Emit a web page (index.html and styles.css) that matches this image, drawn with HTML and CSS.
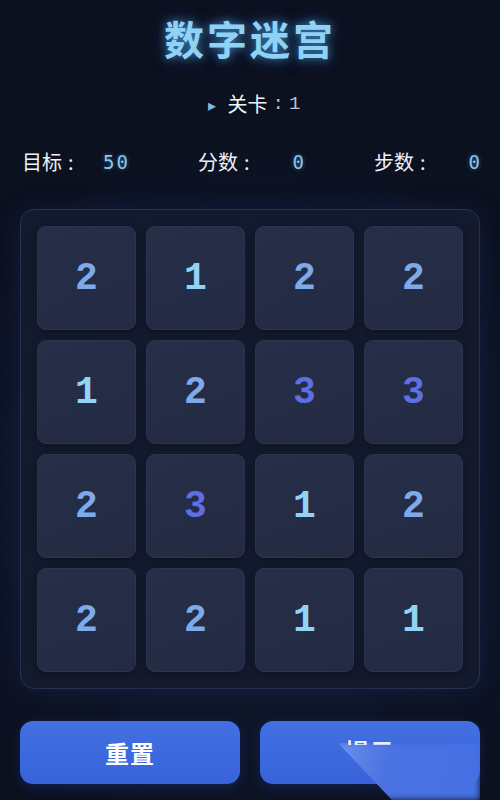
FILE: index.html
```html
<!DOCTYPE html>
<html lang="zh-CN">
<head>
  <meta charset="UTF-8">
  <title>数字迷宫</title>
  <link rel="stylesheet" href="styles.css">
</head>
<body>
  <div class="app">
    <h1 class="title">数字迷宫</h1>

    <div class="level"><span class="arrow">▸</span><span class="level-name">关卡</span><span class="level-num">:1</span></div>

    <div class="stats">
      <div class="stat"><span class="stat-label">目标<span class="colon">:</span></span><span class="stat-value">50</span></div>
      <div class="stat"><span class="stat-label">分数<span class="colon">:</span></span><span class="stat-value">0</span></div>
      <div class="stat"><span class="stat-label">步数<span class="colon">:</span></span><span class="stat-value">0</span></div>
    </div>

    <div class="board">
      <div class="cell n2">2</div><div class="cell n1">1</div><div class="cell n2">2</div><div class="cell n2">2</div>
      <div class="cell n1">1</div><div class="cell n2">2</div><div class="cell n3">3</div><div class="cell n3">3</div>
      <div class="cell n2">2</div><div class="cell n3">3</div><div class="cell n1">1</div><div class="cell n2">2</div>
      <div class="cell n2">2</div><div class="cell n2">2</div><div class="cell n1">1</div><div class="cell n1">1</div>
    </div>

    <div class="actions">
      <button class="btn">重置</button>
      <button class="btn btn-hint"><span class="beam"></span><span class="hint-clip"><span class="hint-text">提示</span></span></button>
    </div>
  </div>
</body>
</html>
```

FILE: styles.css
```css
html, body { margin: 0; height: 100%; }
body {
  background: radial-gradient(ellipse 70% 45% at 50% 62%, #15213f 0%, #0f1629 60%, #0c1120 100%);
  color: #e8eef8;
  font-family: "Noto Sans CJK SC", "Noto Sans", sans-serif;
  overflow: hidden;
}
.app { padding: 14px 20px 0; }

.title {
  margin: 0;
  text-align: center;
  font-size: 40px;
  line-height: 48px;
  font-weight: 700;
  letter-spacing: 3px;
  color: #90d2f4;
  text-shadow: 0 0 8px rgba(80, 170, 240, 0.7), 0 0 18px rgba(60, 140, 230, 0.35);
}

.level {
  margin-top: 28px;
  display: flex;
  justify-content: center;
  align-items: center;
  line-height: 28px;
  font-size: 20px;
  padding-left: 8px;
}
.arrow { color: #7fb6e6; font-size: 16px; margin-right: 12px; }
.level-name { color: #f0f4fa; }
.level-num { color: #b8c2d4; font-family: "Liberation Mono", monospace; font-size: 19px; letter-spacing: 5px; margin-left: 5px; margin-right: -5px; }

.stats {
  margin-top: 30px;
  display: grid;
  grid-template-columns: repeat(3, 1fr);
  column-gap: 70px;
  line-height: 28px;
  padding-left: 2px;
}
.stat { display: flex; align-items: center; justify-content: space-between; }
.stat-label { font-size: 20px; color: #eef2f8; }
.colon { margin-left: 6px; }
.stat-value {
  font-family: "DejaVu Sans Mono", monospace;
  font-size: 19px;
  letter-spacing: 2px;
  margin-right: -2px;
  color: #8cc4ea;
  text-shadow: 0 0 4px rgba(90, 170, 240, 0.5);
}

.board {
  margin-top: 33px;
  display: grid;
  grid-template-columns: repeat(4, 1fr);
  grid-auto-rows: 104px;
  gap: 10px;
  padding: 16px;
  background: #131a2d;
  border: 1px solid #27304f;
  border-radius: 14px;
  box-shadow: 0 0 24px rgba(30, 60, 140, 0.25);
}
.cell {
  display: flex;
  align-items: center;
  justify-content: center;
  background: linear-gradient(160deg, #272e48 0%, #232a42 100%);
  border: 1px solid #2c3450;
  border-radius: 9px;
  box-shadow: 0 2px 6px rgba(0, 0, 0, 0.3);
  font-family: "Liberation Mono", monospace;
  font-weight: 700;
  font-size: 38px;
}
.n1 { color: #92d3f5; }
.n2 { color: #7ea9ea; }
.n3 { color: #5d6fe2; }

.actions {
  margin-top: 32px;
  display: grid;
  grid-template-columns: 1fr 1fr;
  gap: 20px;
}
.btn {
  position: relative;
  height: 63px;
  border: none;
  border-radius: 13px;
  background: linear-gradient(180deg, #4270e2 0%, #3862da 100%);
  color: #ffffff;
  font-family: "Noto Sans CJK SC", sans-serif;
  font-size: 24px;
  font-weight: 700;
  letter-spacing: 1px;
  box-shadow: 0 4px 12px rgba(30, 70, 200, 0.25);
  overflow: visible;
}
.btn-hint { display: block; }
.hint-clip {
  position: absolute;
  left: 0;
  right: 0;
  top: 18px;
  height: 6px;
  overflow: hidden;
  text-align: center;
  line-height: 24px;
  filter: blur(0.5px);
}
.hint-text { color: #e6efff; }
.beam {
  position: absolute;
  left: 78px;
  top: 22px;
  width: 142px;
  height: 57px;
  background: linear-gradient(100deg, rgba(150, 180, 245, 0.55) 0%, #4a72e2 35%, #4670e4 100%);
  clip-path: polygon(0 0, 100% 0, 100% 100%, 38% 100%);
  filter: blur(3px);
}
```
